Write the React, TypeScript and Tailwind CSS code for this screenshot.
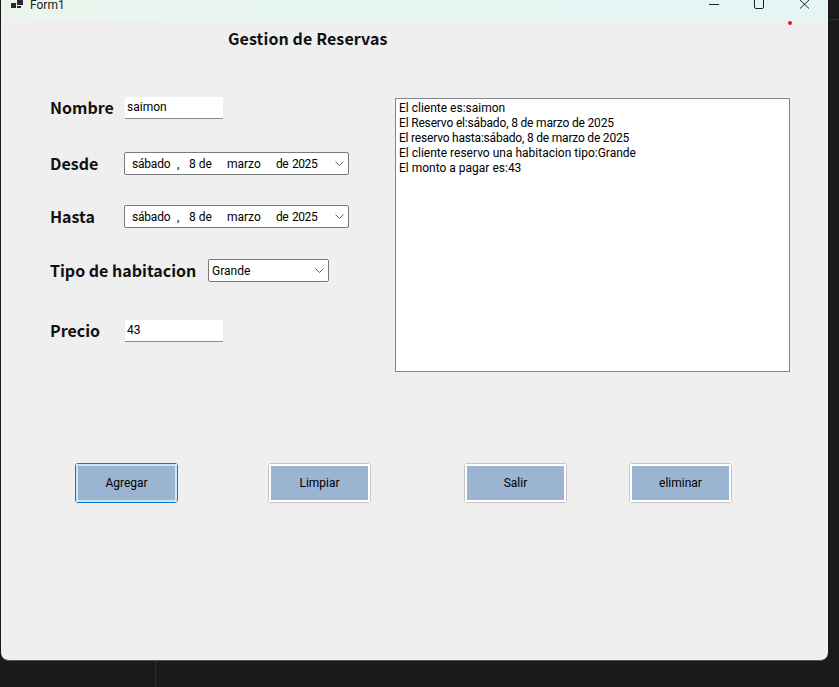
const Chevron = () => (
    <svg width="9" height="5" viewBox="0 0 9 5" fill="none" stroke="#5f5f5f" strokeWidth="1">
        <path d="M0.5 0.5 L4.5 4.5 L8.5 0.5" />
    </svg>
);

const labelClass = "-mt-[2px] font-['Noto_Sans_CJK_JP',sans-serif] font-bold text-[16px] leading-6 text-[#111]";

const DatePicker = () => (
    <div className="ml-auto flex h-[23px] w-[225px] items-center rounded-[2px] border border-[#7a7a7a] bg-white pr-[3px] text-[12px] text-black">
        <span className="ml-[7px] w-[45px] tracking-[-0.2px]">sábado</span>
        <span className="w-[12px]">,</span>
        <span className="w-[38px]">8 de</span>
        <span className="w-[49px]">marzo</span>
        <span className="tracking-[-0.4px] [word-spacing:1px]">de 2025</span>
        <span className="ml-auto mr-[1px] flex"><Chevron /></span>
    </div>
);

const TextBox = ({ value }: { value: string }) => (
    <div className="ml-auto h-[22px] w-[98px] border-b border-[#8a8a8a] bg-white pl-[2px] text-[12px] leading-[20px] text-black">{value}</div>
);

const Button = ({ text, focused }: { text: string, focused?: boolean }) => (
    <div className={`h-[40px] w-[103px] rounded-[3px] border text-[12px] text-black ${focused ? "border-[#0b78d0]" : "border-[#c6c6c6]"}`}>
        <div className={`flex h-full w-full items-center justify-center border-2 bg-[#9ab4d1] ${focused ? "border-[#cfe4f5]" : "border-white"}`}>{text}</div>
    </div>
);

export default function App() {
    return <div className="relative h-[687px] w-[839px] overflow-hidden bg-[#1a1a1a] font-['Roboto','Noto_Sans',sans-serif]">
        <div className="absolute left-[155px] top-[661px] h-[26px] w-px bg-[#2e2e2e]" />
        <div className="absolute left-[829px] top-[19px] h-px w-[10px] bg-[#333]" />
        <div className="ml-px flex h-[661px] w-[827px] flex-col rounded-b-[8px] border-b border-[#555] bg-[#efefef]">
            <div className="flex h-5 items-start bg-gradient-to-r from-[#ebf5ee] via-[#e6f6f1] to-[#e5f5f6]">
                <svg className="ml-[10px]" width="13" height="9" viewBox="0 0 13 9" fill="#2b2b2b">
                    <rect x="0" y="3" width="5" height="5" />
                    <rect x="6" y="0" width="6" height="5" />
                    <rect x="6" y="6" width="4" height="2" />
                </svg>
                <span className="ml-[6px] -mt-[3px] text-[12px] leading-[16px] text-[#222]">Form1</span>
                <svg className="ml-auto" width="108" height="12" viewBox="0 0 108 12" fill="none" stroke="#222" strokeWidth="1">
                    <path d="M0 4.5 H10" />
                    <path d="M45.5 0 V7 Q45.5 8.5 47 8.5 H53 Q54.5 8.5 54.5 7 V0" />
                    <path d="M91 0 L100 8.5 M100 0 L91 8.5" />
                </svg>
                <div className="w-[11px]" />
            </div>

            <div className="mt-[6px] h-6 pl-[227px] font-['Noto_Sans_CJK_JP',sans-serif] text-[16px] font-bold leading-6 tracking-[0.1px] text-[#111]">
                Gestion de Reservas
            </div>

            <div className="mt-[47px] flex items-start pl-[49px]">
                <div className="w-[299px]">
                    <div className="flex h-[22px] items-center">
                        <span className={labelClass}>Nombre</span>
                        <div className="ml-auto mr-[126px]"><TextBox value="saimon" /></div>
                    </div>
                    <div className="mt-[33px] flex h-[23px] items-center">
                        <span className={labelClass}>Desde</span>
                        <DatePicker />
                    </div>
                    <div className="mt-[30px] flex h-[23px] items-center">
                        <span className={labelClass}>Hasta</span>
                        <DatePicker />
                    </div>
                    <div className="mt-[31px] flex h-[23px] items-center">
                        <span className={labelClass}>Tipo de habitacion</span>
                        <div className="ml-auto mr-[20px] flex h-[23px] w-[121px] items-center rounded-[2px] border border-[#7a7a7a] bg-white pl-[3px] pr-[3px] text-[12px] text-black">
                            Grande
                            <span className="ml-auto mr-[1px] flex"><Chevron /></span>
                        </div>
                    </div>
                    <div className="mt-[38px] flex h-[22px] items-center">
                        <span className={labelClass}>Precio</span>
                        <div className="ml-auto mr-[126px]"><TextBox value="43" /></div>
                    </div>
                </div>
                <div className="ml-[46px] mt-px h-[274px] w-[395px] border border-[#80868c] bg-white pl-[3px] pt-[2px] text-[12px] leading-[15px] text-black">
                    <div>El cliente es:saimon</div>
                    <div className="tracking-[-0.17px]">El Reservo el:sábado, 8 de marzo de 2025</div>
                    <div className="tracking-[-0.2px]">El reservo hasta:sábado, 8 de marzo de 2025</div>
                    <div>El cliente reservo una habitacion tipo:Grande</div>
                    <div>El monto a pagar es:43</div>
                </div>
            </div>

            <div className="mt-[91px] flex pl-[74px]">
                <Button text="Agregar" focused />
                <div className="ml-[90px]"><Button text="Limpiar" /></div>
                <div className="ml-[93px]"><Button text="Salir" /></div>
                <div className="ml-[62px]"><Button text="eliminar" /></div>
            </div>
        </div>
        <div className="absolute left-[788px] top-[21px] h-1 w-1 rounded-full bg-[#f01020]" />
    </div>
}
